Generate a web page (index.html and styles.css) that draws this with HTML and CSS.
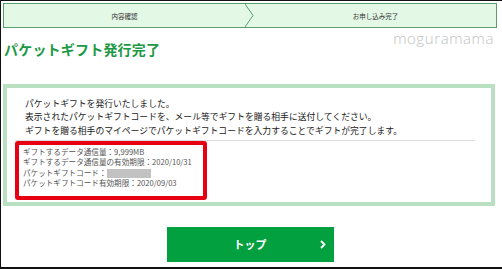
FILE: index.html
```html
<!DOCTYPE html>
<html lang="ja">
<head>
  <meta charset="UTF-8" />
  <meta name="viewport" content="width=device-width, initial-scale=1.0"/>
  <title>パケットギフト発行完了</title>
  <link rel="stylesheet" href="styles.css">
</head>
<body>
  <div class="frame">
    <div class="steps">
      <div class="step">内容確認</div>
      <svg class="step-arrow" width="10" height="23" viewBox="0 0 10 23">
        <polyline points="0,0 8,11.5 0,23" fill="#e4f8e6" stroke="#5a9e6e" stroke-width="1"/>
      </svg>
      <div class="step">お申し込み完了</div>
    </div>

    <div class="watermark">moguramama</div>

    <h1 class="title">パケットギフト発行完了</h1>

    <div class="result-box">
      <p class="message">
        パケットギフトを発行いたしました。<br>
        表示されたパケットギフトコードを、メール等でギフトを贈る相手に送付してください。<br>
        ギフトを贈る相手のマイページでパケットギフトコードを入力することでギフトが完了します。
      </p>
      <div class="info">
        <div>ギフトするデータ通信量：9,999MB</div>
        <div>ギフトするデータ通信量の有効期限：2020/10/31</div>
        <div>パケットギフトコード：<span class="masked"></span></div>
        <div>パケットギフトコード有効期限：2020/09/03</div>
        <div class="highlight"></div>
      </div>
    </div>

    <div class="actions">
      <button class="button">
        トップ
        <svg class="button-arrow" width="6" height="9" viewBox="0 0 6 9">
          <polyline points="1,1 4.5,4.5 1,8" fill="none" stroke="#fff" stroke-width="1.8"/>
        </svg>
      </button>
    </div>
  </div>
</body>
</html>
```

FILE: styles.css
```css
body {
  margin: 0;
  padding: 0;
  background: #fff;
  font-family: "Noto Sans CJK JP", "Noto Sans", sans-serif;
  color: #333;
}
.frame {
  position: relative;
  width: 502px;
  height: 269px;
  box-sizing: border-box;
  border-top: 1px solid #111;
  border-left: 1px solid #111;
  border-bottom: 2px solid #111;
  padding: 2px 5px 0 2px;
  overflow: hidden;
}
.steps {
  display: grid;
  grid-template-columns: 1fr 10px 1fr;
  height: 25px;
  box-sizing: border-box;
  border: 1px solid #5a9e6e;
  background: #e4f8e6;
}
.step {
  display: flex;
  align-items: center;
  justify-content: center;
  font-size: 6.5px;
  color: #333;
}
.step-arrow {
  display: block;
}
.watermark {
  position: absolute;
  top: 30px;
  right: 8px;
  font-family: "Open Sans", sans-serif;
  font-size: 15px;
  line-height: 15px;
  letter-spacing: 0.6px;
  font-weight: 300;
  color: #c2c2c2;
}
.title {
  margin: 12px 0 0 1px;
  font-size: 14px;
  line-height: 18px;
  letter-spacing: 0.2px;
  font-weight: bold;
  color: #1c9945;
}
.result-box {
  margin: 26px 2px 0 0;
  border: 4px solid #b9e0c1;
  padding: 9px 0 13px 0;
}
.message {
  margin: 0;
  padding-left: 18px;
  font-size: 8.8px;
  line-height: 13.3px;
  color: #222;
}
.info {
  position: relative;
  margin: 3px 16px 0 8px;
  border-top: 1px solid #dcdcdc;
  padding: 6px 0 0 8px;
  font-size: 7.6px;
  line-height: 10.5px;
  color: #555;
}
.masked {
  display: inline-block;
  width: 44px;
  height: 9px;
  background: #c2c2c2;
  vertical-align: -2px;
}
.highlight {
  position: absolute;
  top: 0;
  left: 0;
  width: 192px;
  height: 59px;
  box-sizing: border-box;
  border: 4px solid #e60012;
  border-radius: 3px;
}
.actions {
  display: flex;
  justify-content: center;
  margin-top: 21px;
}
.button {
  position: relative;
  width: 167px;
  height: 35px;
  border: none;
  background: #03a03f;
  color: #fff;
  font-family: "Noto Sans CJK JP", sans-serif;
  font-size: 11px;
  font-weight: bold;
  padding: 0;
}
.button-arrow {
  position: absolute;
  right: 8px;
  top: 13px;
}
```
